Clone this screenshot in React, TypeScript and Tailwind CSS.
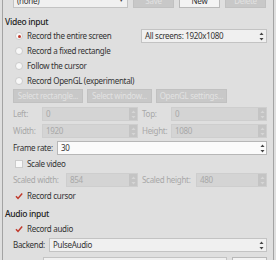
import React from "react";

const Arrows = ({ color }: { color: string }) => (
  <svg width="5" height="9" viewBox="0 0 5 9">
    <path d="M2.5 0.5 L4.5 3 L0.5 3 Z" fill={color} />
    <path d="M2.5 8.5 L4.5 6 L0.5 6 Z" fill={color} />
  </svg>
);

const Spin = ({ value, enabled, className = "" }: { value: string; enabled?: boolean; className?: string }) => (
  <div
    className={`flex h-[14px] border ${
      enabled ? "bg-[#fbfbfb] border-[#b7b7b7] text-[#333]" : "bg-[#d4d4d4] border-[#cecece] text-[#a8a8a8]"
    } ${className}`}
  >
    <span className="flex-1 pl-[3px] leading-[12px]">{value}</span>
    <span className={`w-[8px] flex items-center justify-center ${enabled ? "" : "bg-[#c4c4c4]"}`}>
      <Arrows color={enabled ? "#444" : "#d6d6d6"} />
    </span>
  </div>
);

const Combo = ({ value, className = "" }: { value: string; className?: string }) => (
  <div className={`flex h-[14px] border border-[#c3c3c3] bg-[#f0f0f0] text-[#333] ${className}`}>
    <span className="flex-1 pl-[3px] leading-[12px] overflow-hidden">{value}</span>
    <span className="w-[10px] flex items-center justify-center">
      <Arrows color="#444" />
    </span>
  </div>
);

const Btn = ({ label, enabled, className = "" }: { label: string; enabled?: boolean; className?: string }) => (
  <div
    className={`h-[14px] border flex items-center justify-center leading-none overflow-hidden ${
      enabled ? "bg-[#f3f3f3] border-[#b9b9b9] text-[#333]" : "bg-[#c8c8c8] border-[#c1c1c1] text-[#e2e2e2]"
    } ${className}`}
  >
    {label}
  </div>
);

const Radio = ({ label, checked }: { label: string; checked?: boolean }) => (
  <div className="flex items-center h-[15px] pl-[2px]">
    <span className="w-[8px] h-[8px] rounded-full bg-[#f8f8f8] border border-[#cbcbcb] flex items-center justify-center">
      {checked && <span className="w-[3px] h-[3px] rounded-full bg-[#c0392b]" />}
    </span>
    <span className="ml-[4px]">{label}</span>
  </div>
);

const Check = ({ label, checked }: { label: string; checked?: boolean }) => (
  <div className="flex items-center h-[14px] pl-[2px]">
    {checked ? (
      <svg width="8" height="8" viewBox="0 0 8 8">
        <path d="M1 4.2 L3 6.4 L7.2 1.4" stroke="#c0392b" strokeWidth="1.5" fill="none" />
      </svg>
    ) : (
      <span className="w-[8px] h-[8px] bg-[#f8f8f8] border border-[#cbcbcb]" />
    )}
    <span className="ml-[4px]">{label}</span>
  </div>
);

export default function App() {
  return (
    <div className="w-[276px] h-[260px] overflow-hidden bg-[#dfdfdf] px-[2px] font-['Noto_Sans',sans-serif] text-[8px] tracking-[-0.3px] whitespace-nowrap text-[#333]">
      <div className="h-full border-x border-[#a3a3a3] overflow-hidden">
        <div className="-mt-[7px] pl-[10px] pr-[6px]">
          {/* profile row */}
          <div className="flex items-center h-[15px]">
            <div className="w-[115px] h-[15px] border border-[#c3c3c3] bg-[#f0f0f0] flex items-center pl-[3px] pr-[3px]">
              <span className="flex-1">(none)</span>
              <span className="text-[6px] text-[#444]">▼</span>
            </div>
            <Btn label="Save" className="ml-[5px] w-[41px] h-[15px]" />
            <Btn label="New" enabled className="ml-[5px] w-[41px] h-[15px]" />
            <Btn label="Delete" className="ml-[5px] w-[41px] h-[15px]" />
          </div>

          <div className="mt-[7px] h-[14px] flex items-center -ml-[8px] font-medium text-[8.5px] text-[#222]">Video input</div>

          <div className="flex items-center h-[14px]">
            <div className="flex-1">
              <Radio label="Record the entire screen" checked />
            </div>
            <Combo value="All screens: 1920x1080" className="w-[126px]" />
          </div>
          <Radio label="Record a fixed rectangle" />
          <Radio label="Follow the cursor" />
          <Radio label="Record OpenGL (experimental)" />

          <div className="mt-[1px] flex items-center">
            <Btn label="Select rectangle..." className="w-[70px] h-[13px]" />
            <Btn label="Select window..." className="ml-[4px] w-[65px] h-[13px]" />
            <Btn label="OpenGL settings..." className="ml-[4px] w-[71px] h-[13px]" />
          </div>

          <div className="mt-[4px] flex gap-[4px] text-[#a8a8a8]">
            <div className="flex-1 flex items-center">
              <span className="w-[29px]">Left:</span>
              <Spin value="0" className="flex-1" />
            </div>
            <div className="flex-1 flex items-center">
              <span className="w-[29px]">Top:</span>
              <Spin value="0" className="flex-1" />
            </div>
          </div>

          <div className="mt-[3px] flex gap-[4px] text-[#a8a8a8]">
            <div className="flex-1 flex items-center">
              <span className="w-[29px]">Width:</span>
              <Spin value="1920" className="flex-1" />
            </div>
            <div className="flex-1 flex items-center">
              <span className="w-[29px]">Height:</span>
              <Spin value="1080" className="flex-1" />
            </div>
          </div>

          <div className="mt-[3px] flex items-center">
            <span className="w-[44px]">Frame rate:</span>
            <Spin value="30" enabled className="flex-1" />
          </div>

          <div className="mt-[2px]">
            <Check label="Scale video" />
          </div>

          <div className="mt-[2px] flex gap-[4px] text-[#a8a8a8]">
            <div className="flex-1 flex items-center">
              <span className="w-[53px]">Scaled width:</span>
              <Spin value="854" className="flex-1" />
            </div>
            <div className="flex-1 flex items-center">
              <span className="w-[54px]">Scaled height:</span>
              <Spin value="480" className="flex-1" />
            </div>
          </div>

          <div className="mt-[2px]">
            <Check label="Record cursor" checked />
          </div>

          <div className="mt-[4px] h-[14px] flex items-center -ml-[8px] font-medium text-[8.5px] text-[#222]">Audio input</div>

          <div className="mt-[1px]">
            <Check label="Record audio" checked />
          </div>

          <div className="mt-[2px] flex items-center">
            <span className="w-[36px]">Backend:</span>
            <Combo value="PulseAudio" className="flex-1" />
          </div>

          <div className="mt-[5px] flex items-center">
            <span className="w-[36px]">Source:</span>
            <Combo value="Monitor of HDA Intel PCH Digital Stereo (HDMI 4)" className="flex-1" />
            <Btn label="Refresh" enabled className="ml-[5px] w-[42px]" />
          </div>
        </div>
      </div>
    </div>
  );
}
